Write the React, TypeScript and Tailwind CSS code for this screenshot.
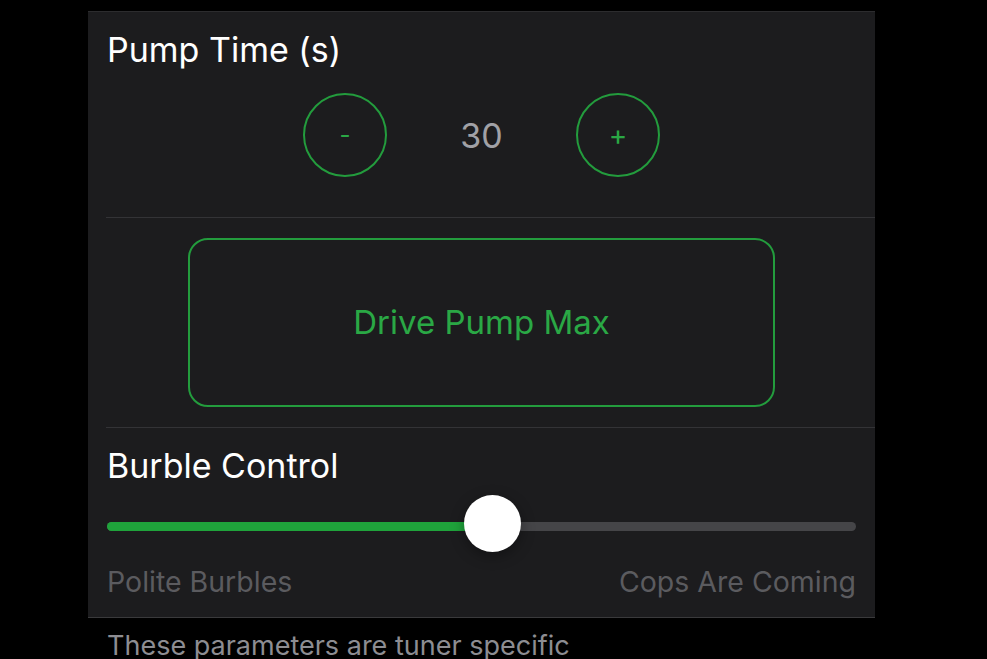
import { useState } from 'react';

export default function App() {
  const [pumpTime, setPumpTime] = useState(30);
  const [burble] = useState(51.5);

  return (
    <div className="h-[659px] w-full overflow-hidden bg-black font-['Inter','Noto_Sans',sans-serif]">
      <div className="pt-[11px] pl-[88px]">
        {/* ===== Settings card ===== */}
        <div className="w-[787px] bg-[#1c1c1e] border-t border-t-[#2c2c2e] border-b border-b-[#3a3a3c]">
          {/* Pump Time */}
          <div className="px-[19px] pt-[18px] pb-[40px]">
            <h2 className="text-[34px] leading-[40px] text-white">Pump Time (s)</h2>
            <div className="mt-[23px] flex items-center justify-center">
              <button
                onClick={() => setPumpTime(pumpTime - 1)}
                className="w-[84px] h-[84px] rounded-full border-2 border-[#239c3d] flex items-center justify-center text-[#2aa845] text-[24px]"
              >
                -
              </button>
              <span className="w-[189px] text-center text-[34px] text-[#a1a1a6]">{pumpTime}</span>
              <button
                onClick={() => setPumpTime(pumpTime + 1)}
                className="w-[84px] h-[84px] rounded-full border-2 border-[#239c3d] flex items-center justify-center text-[#2aa845] text-[28px]"
              >
                +
              </button>
            </div>
          </div>

          <div className="ml-[18px] h-px bg-[#333336]" />

          {/* Drive button */}
          <div className="py-[20px] flex justify-center">
            <button className="w-[587px] h-[169px] rounded-[20px] border-2 border-[#239c3d] text-[33px] text-[#2aa845]">
              Drive Pump Max
            </button>
          </div>

          <div className="ml-[18px] h-px bg-[#333336]" />

          {/* Burble Control */}
          <div className="px-[19px] pt-[18px] pb-[18px]">
            <h2 className="text-[34px] leading-[40px] text-white">Burble Control</h2>
            <div className="relative mt-[9px] h-[57px] flex items-center">
              <div className="mt-[5px] w-full h-[9px] rounded-full bg-[#454548] overflow-hidden">
                <div className="h-full bg-[#1fa33b]" style={{ width: `${burble}%` }} />
              </div>
              <div
                className="absolute top-0 w-[57px] h-[57px] rounded-full bg-white shadow-[0_4px_14px_rgba(0,0,0,0.35)]"
                style={{ left: `calc(${burble}% - 28.5px)` }}
              />
            </div>
            <div className="mt-[13px] flex justify-between text-[28.5px] leading-[34px] text-[#5b5b5f]">
              <span>Polite Burbles</span>
              <span>Cops Are Coming</span>
            </div>
          </div>
        </div>

        {/* Footer note */}
        <p className="pl-[19px] pt-[12px] text-[27px] leading-[32px] text-[#8d8d92]">
          These parameters are tuner specific
        </p>
      </div>
    </div>
  );
}
